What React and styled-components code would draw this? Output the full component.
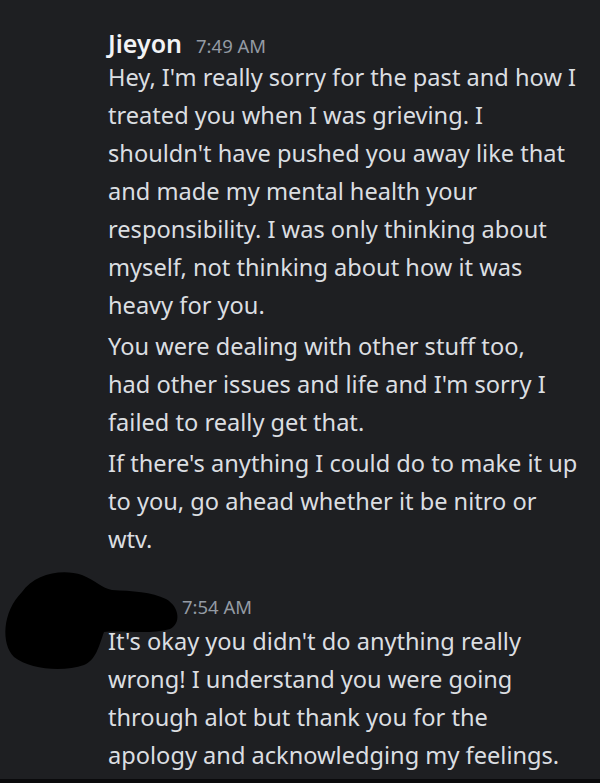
import React from 'react'
import styled, { createGlobalStyle } from 'styled-components'

const GlobalStyle = createGlobalStyle`
  html, body {
    margin: 0;
    padding: 0;
    background: #1e1f22;
  }
  * { box-sizing: border-box; }
`

// lines kept as in the capture so the wrap matches
const messages = [
  {
    author: 'Jieyon',
    time: '7:49 AM',
    paragraphs: [
      [
        "Hey, I'm really sorry for the past and how I",
        'treated you when I was grieving. I',
        "shouldn't have pushed you away like that",
        'and made my mental health your',
        'responsibility. I was only thinking about',
        'myself, not thinking about how it was',
        'heavy for you.',
      ],
      [
        'You were dealing with other stuff too,',
        "had other issues and life and I'm sorry I",
        'failed to really get that.',
      ],
      [
        "If there's anything I could do to make it up",
        'to you, go ahead whether it be nitro or',
        'wtv.',
      ],
    ],
  },
  {
    author: null,
    time: '7:54 AM',
    paragraphs: [
      [
        "It's okay you didn't do anything really",
        'wrong! I understand you were going',
        'through alot but thank you for the',
        'apology and acknowledging my feelings.',
      ],
    ],
  },
]

const Scribble = () => (
  <Blot viewBox="0 0 190 110" width="190" height="110">
    <path
      d="M 22 28 C 34 10, 62 4, 82 11 C 96 17, 102 24, 112 26 C 132 27, 152 28, 166 35 C 180 43, 181 60, 170 65 C 150 71, 122 66, 104 68 C 99 82, 96 96, 84 101 C 64 108, 30 106, 14 93 C 1 80, 2 48, 22 28 Z"
      fill="#000"
    />
  </Blot>
)

const Message = ({ author, time, paragraphs }) => (
  <Group>
    {!author && <Scribble />}
    <Header>
      {author ? <Name>{author}</Name> : <Redacted />}
      <Time>{time}</Time>
    </Header>
    {paragraphs.map((lines, i) => (
      <Paragraph key={i}>
        {lines.map((l, j) => (
          <Line key={j}>{l}</Line>
        ))}
      </Paragraph>
    ))}
  </Group>
)

const App = () => (
  <>
    <GlobalStyle />
    <Page>
      <Chat>
        {messages.map((m, i) => (
          <Message key={i} {...m} />
        ))}
      </Chat>
    </Page>
  </>
)

const Page = styled.div`
  width: 600px;
  height: 783px;
  overflow: hidden;
  background: #1e1f22;
  border-bottom: 4px solid #0a0a0c;
  font-family: 'Noto Sans', 'Open Sans', sans-serif;
`

const Chat = styled.div`
  display: flex;
  flex-direction: column;
  gap: 34px;
  padding-top: 28px;
`

const Group = styled.div`
  position: relative;
  padding-left: 108px;
`

const Header = styled.div`
  display: flex;
  align-items: baseline;
  gap: 14px;
  height: 30px;
  line-height: 30px;
`

const Name = styled.span`
  font-size: 25px;
  font-weight: 600;
  color: #f2f3f5;
`

const Redacted = styled.span`
  display: inline-block;
  width: 60px;
`

const Time = styled.span`
  font-size: 18.5px;
  color: #949ba4;
`

const Paragraph = styled.p`
  margin: 0;
  font-size: 23.6px;
  line-height: 38px;
  color: #dbdee1;
  white-space: nowrap;
  & + & {
    margin-top: 3px;
  }
`

const Line = styled.span`
  display: block;
`

const Blot = styled.svg`
  position: absolute;
  left: 0;
  top: -28px;
  pointer-events: none;
`

export default App
